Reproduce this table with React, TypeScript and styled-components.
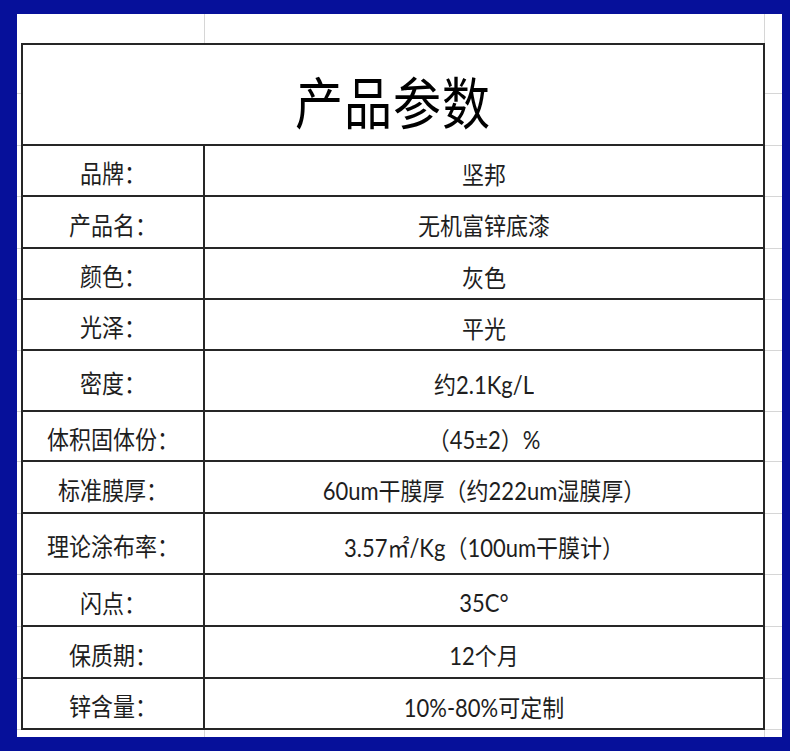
import React from "react";
import styled, { createGlobalStyle } from "styled-components";

type Spec = { label: string; value: string; height: number };

const specs: Spec[] = [
  { label: "品牌：", value: "坚邦", height: 51 },
  { label: "产品名：", value: "无机富锌底漆", height: 52 },
  { label: "颜色：", value: "灰色", height: 51 },
  { label: "光泽：", value: "平光", height: 51 },
  { label: "密度：", value: "约2.1Kg/L", height: 61 },
  { label: "体积固体份：", value: "（45±2）%", height: 50 },
  { label: "标准膜厚：", value: "60um干膜厚（约222um湿膜厚）", height: 52 },
  { label: "理论涂布率：", value: "3.57㎡/Kg（100um干膜计）", height: 61 },
  { label: "闪点：", value: "35C°", height: 52 },
  { label: "保质期：", value: "12个月", height: 52 },
  { label: "锌含量：", value: "10%-80%可定制", height: 51 },
];

const GlobalStyle = createGlobalStyle`
  html, body {
    margin: 0;
    padding: 0;
    background: #06109a;
  }
  * {
    box-sizing: border-box;
  }
`;

const Frame = styled.div`
  width: 790px;
  height: 751px;
  padding: 14px 8px 14px 17px;
  background: #06109a;
`;

const Sheet = styled.div`
  width: 765px;
  height: 723px;
  background: #ffffff;
  display: flex;
  flex-direction: column;
  overflow: hidden;
`;

const Row = styled.div<{ $h: number }>`
  display: grid;
  grid-template-columns: 4px 184px 560px 17px;
  height: ${(p) => p.$h}px;
  flex-shrink: 0;
`;

const Gutter = styled.div<{ $split?: boolean; $line?: boolean }>`
  border-bottom: ${(p) => (p.$line ? "1px solid #d6d6d6" : "none")};
  background: ${(p) =>
    p.$split
      ? "linear-gradient(#fff 0 50px, #d6d6d6 50px 51px, #fff 51px)"
      : "#fff"};
`;

const Blank = styled.div<{ $divider?: boolean }>`
  border-right: ${(p) => (p.$divider ? "1px solid #d6d6d6" : "none")};
`;

const TitleCell = styled.div`
  grid-column: span 2;
  border: 2px solid #262626;
  display: flex;
  align-items: center;
  justify-content: center;
  padding-top: 10px;
  font-family: "Noto Sans CJK SC", sans-serif;
  font-size: 48px;
  font-weight: 400;
  color: #000;
  letter-spacing: 1px;
`;

const LabelCell = styled.div`
  border-left: 2px solid #262626;
  border-right: 2px solid #262626;
  border-bottom: 2px solid #262626;
  display: flex;
  align-items: center;
  justify-content: center;
  padding-top: 3px;
  font-family: "Noto Sans CJK SC", sans-serif;
  font-size: 22px;
  color: #1e1e1e;
`;

const ValueCell = styled.div`
  border-right: 2px solid #262626;
  border-bottom: 2px solid #262626;
  display: flex;
  align-items: center;
  justify-content: center;
  padding-top: 4px;
  font-family: Lato, "Noto Sans CJK SC", sans-serif;
  font-size: 22px;
  color: #1e1e1e;
`;

// the screenshot's glyphs are a little stretched vertically
const Tall = styled.span<{ $k: number }>`
  display: inline-block;
  transform: scaleY(${(p) => p.$k});
`;

const App: React.FC = () => {
  return (
    <>
      <GlobalStyle />
      <Frame>
        <Sheet>
          <Row $h={29}>
            <Gutter />
            <Blank $divider />
            <Blank $divider />
            <Gutter />
          </Row>
          <Row $h={103}>
            <Gutter $split $line />
            <TitleCell>
              <Tall $k={1.15}>产品参数</Tall>
            </TitleCell>
            <Gutter $split $line />
          </Row>
          {specs.map((s) => (
            <Row key={s.label} $h={s.height}>
              <Gutter $line />
              <LabelCell>
                <Tall $k={1.12}>{s.label}</Tall>
              </LabelCell>
              <ValueCell>
                <Tall $k={1.1}>{s.value}</Tall>
              </ValueCell>
              <Gutter $line />
            </Row>
          ))}
          <Row $h={10}>
            <Gutter />
            <Blank $divider />
            <Blank $divider />
            <Gutter />
          </Row>
        </Sheet>
      </Frame>
    </>
  );
};

export default App;
